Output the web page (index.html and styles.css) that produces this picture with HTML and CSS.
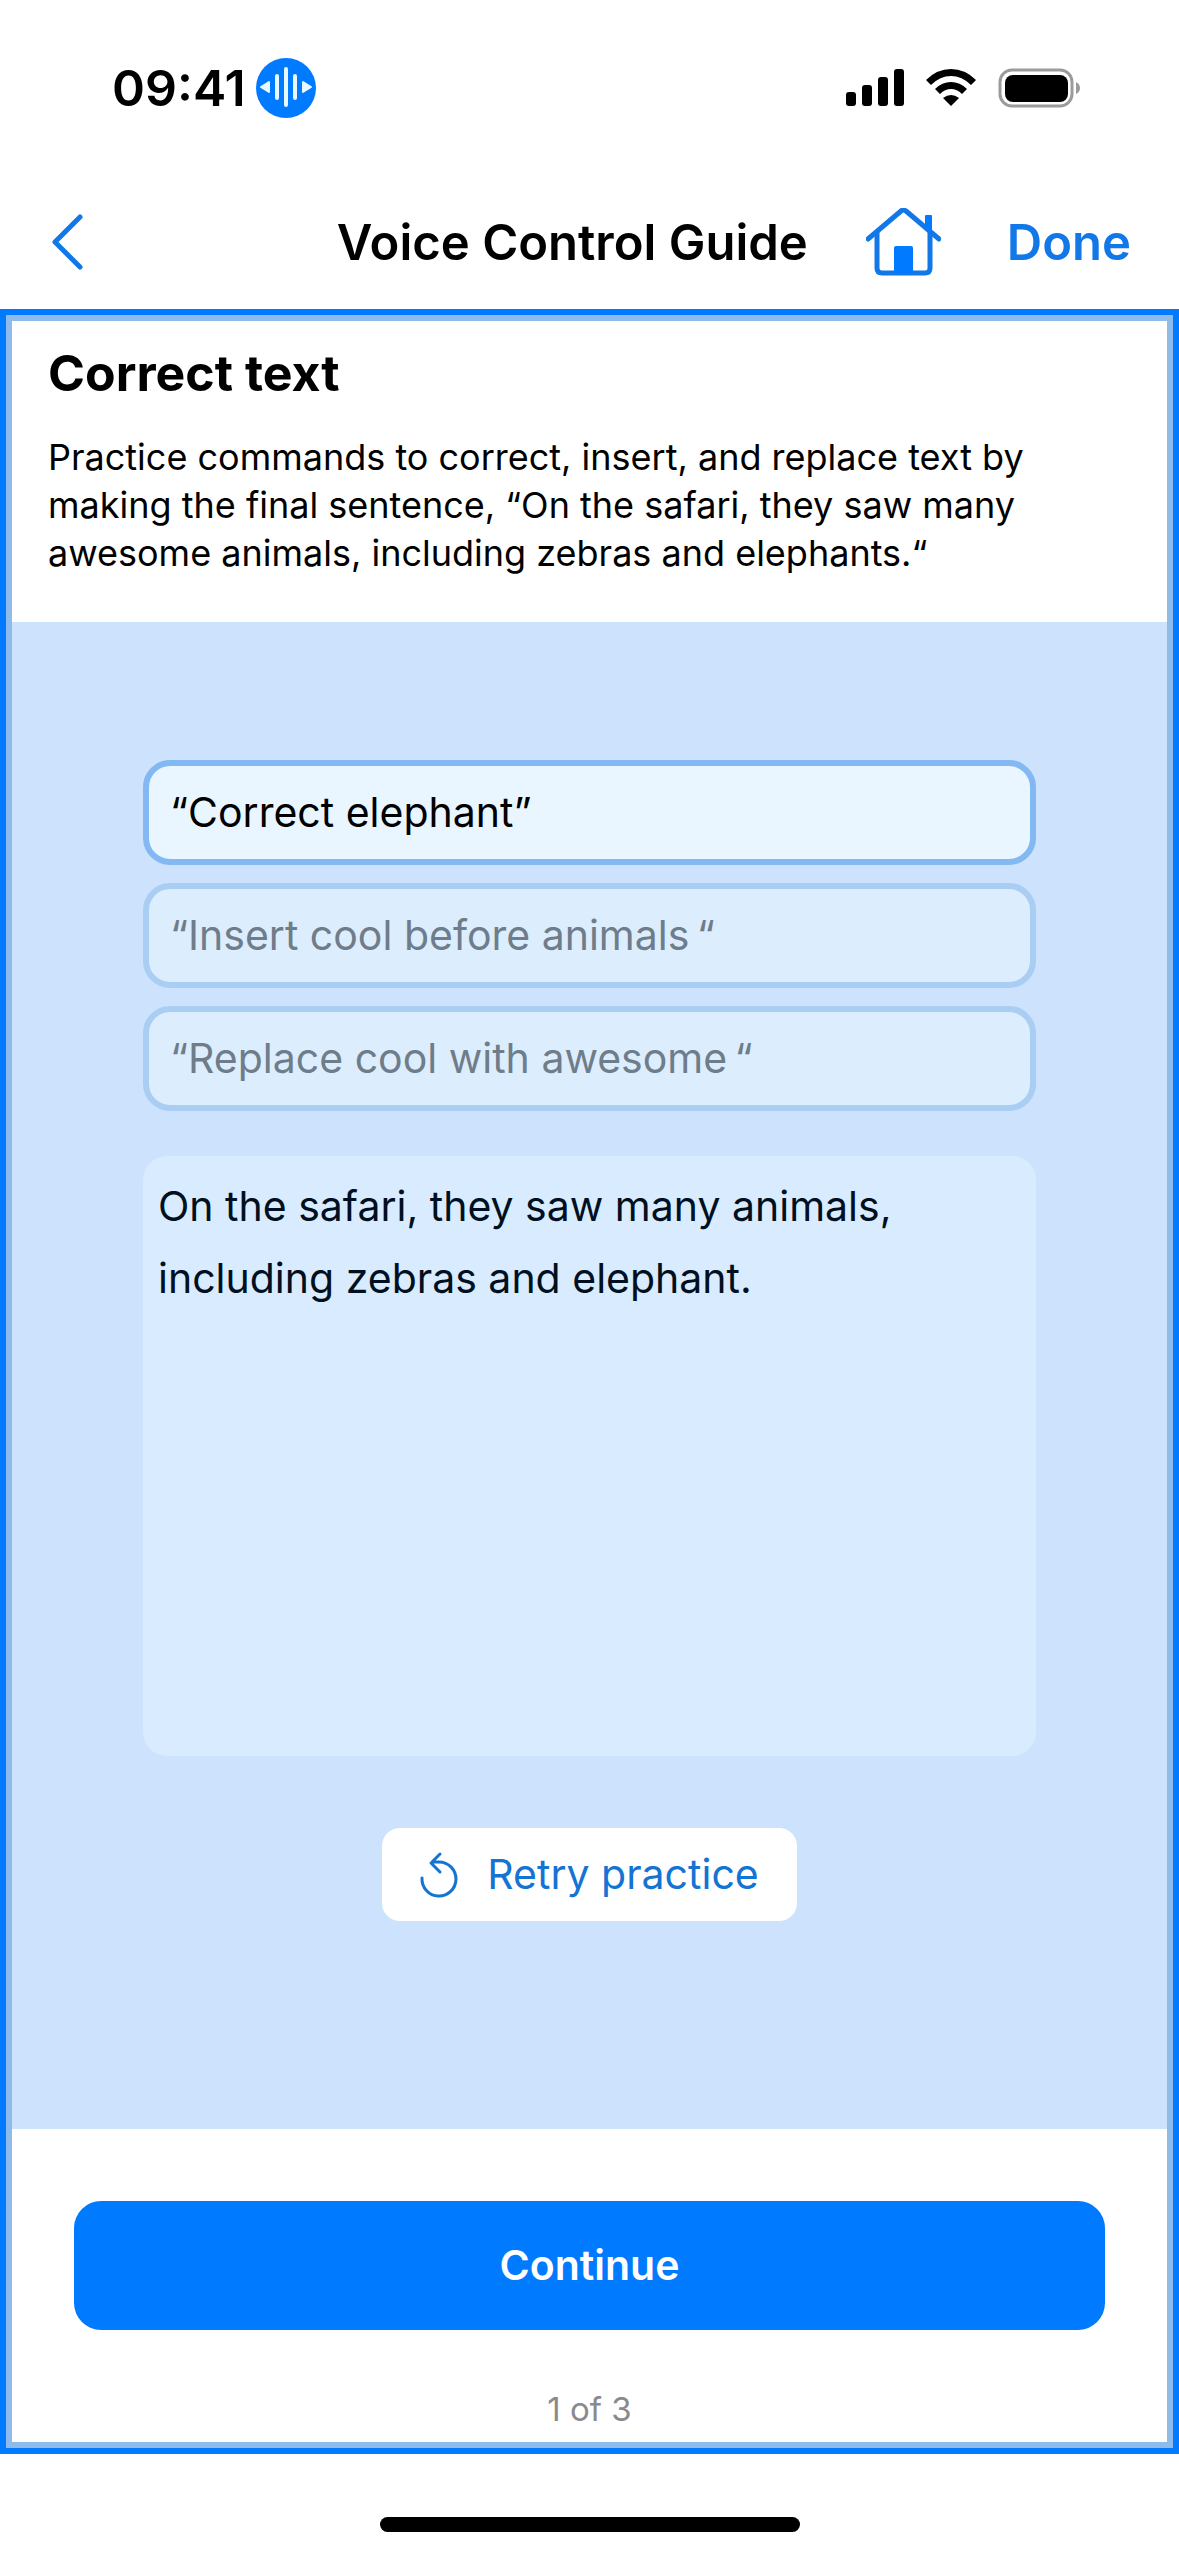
FILE: index.html
```
<!DOCTYPE html>
<html lang="en">
<head>
    <meta charset="UTF-8">
    <meta name="viewport" content="width=device-width, initial-scale=1.0">
    <title>Voice Control Guide</title>
    <link rel="stylesheet" href="styles.css">
</head>

<body>
    <div class="statusBar">
        <div class="clock">
            <span>09:41</span>
            <svg class="voiceIcon" viewBox="0 0 60 60" aria-hidden="true">
                <circle cx="30" cy="30" r="30" fill="#007aff"/>
                <path d="M21 18v22M30 11v36M39 18v22" stroke="#e8faff" stroke-width="4" stroke-linecap="round"/>
                <path d="M5 29l8-5v10zM55 29l-8-5v10z" fill="#e8faff" stroke="#e8faff" stroke-width="2" stroke-linejoin="round"/>
            </svg>
        </div>
        <div class="indicators">
            <svg width="58" height="38" viewBox="0 0 58 38" aria-hidden="true">
                <rect x="0" y="23" width="10" height="14" rx="3"/>
                <rect x="16" y="16" width="10" height="21" rx="3"/>
                <rect x="32" y="8" width="10" height="29" rx="3"/>
                <rect x="48" y="0" width="10" height="37" rx="3"/>
            </svg>
            <svg width="50" height="38" viewBox="0 0 50 38" aria-hidden="true">
                <path d="M0 11Q11 0 25 0T50 11L45 16Q36 7 25 7T5 16z"/>
                <path d="M9 20Q16 13 25 13T41 20L36 25Q31 20 25 20T14 25z"/>
                <path d="M17 29Q21 26 25 26T33 29L25 37z"/>
            </svg>
            <svg width="83" height="40" viewBox="0 0 83 40" aria-hidden="true">
                <rect x="2" y="2" width="72" height="36" rx="12" fill="none" stroke="#9b9b9b" stroke-width="3"/>
                <rect x="7" y="7" width="63" height="27" rx="8"/>
                <path d="M78 14q4 2 4 6t-4 6z" fill="#9b9b9b"/>
            </svg>
        </div>
    </div>

    <nav class="navBar">
        <button type="button" class="iconBtn" aria-label="Back">
            <svg width="38" height="58" viewBox="0 0 38 58"><path d="M32 3L7 28L32 53" fill="none" stroke="currentColor" stroke-width="5" stroke-linecap="round" stroke-linejoin="round"/></svg>
        </button>
        <h1>Voice Control Guide</h1>
        <button type="button" class="iconBtn" aria-label="Home">
            <svg width="75" height="70" viewBox="0 0 75 70">
                <path d="M2 31L35 3Q37 1 40 3L73 31" fill="none" stroke="currentColor" stroke-width="5" stroke-linecap="round" stroke-linejoin="round"/>
                <path d="M11 24V60Q11 65 16 65H59Q64 65 64 60V24" fill="none" stroke="currentColor" stroke-width="5"/>
                <path d="M59 18V8Q59 7 60 7H65Q66 7 66 8V25z" fill="#007aff"/>
                <path d="M28 65V40Q28 38 30 38H45Q47 38 47 40V65z" fill="#007aff"/>
            </svg>
        </button>
        <button type="button" class="doneBtn">Done</button>
    </nav>

    <main class="frame">
        <section class="intro">
            <h2>Correct text</h2>
            <p>Practice commands to correct, insert, and replace text by making the final sentence, “On the safari, they saw many awesome animals, including zebras and elephants.“</p>
        </section>

        <section class="practice">
            <ol class="commands">
                <li class="active">“Correct elephant”</li>
                <li>“Insert cool before animals&thinsp;“</li>
                <li>“Replace cool with awesome&thinsp;“</li>
            </ol>
            <textarea class="editor" aria-label="Practice text">On the safari, they saw many animals, including zebras and elephant.</textarea>
            <button type="button" class="retryBtn">
                <svg width="40" height="48" viewBox="0 0 40 48" aria-hidden="true">
                    <path d="M2 27A17 17 0 1 0 19 11H12M20 3L11 12L20 21" fill="none" stroke="currentColor" stroke-width="3" stroke-linecap="round" stroke-linejoin="round"/>
                </svg>
                Retry practice
            </button>
        </section>

        <footer class="bottom">
            <button type="button" class="continueBtn">Continue</button>
            <span class="pageCount">1 of 3</span>
        </footer>
    </main>

    <div class="homeIndicator"></div>
</body>
</html>
```

FILE: styles.css
```
* {
    box-sizing: border-box;
}

body {
    font-family: Inter, "Liberation Sans", sans-serif;
    background-color: #fff;
    color: #000;
    margin: 0;
    min-height: 100vh;
    display: flex;
    flex-direction: column;
}

h1, h2, p, ol {
    margin: 0;
    padding: 0;
}

button {
    font-family: inherit;
    border: none;
    background: none;
    padding: 0;
    color: #1278e8;
}

svg {
    display: block;
    flex: none;
}

/* status bar */
.statusBar {
    display: flex;
    justify-content: space-between;
    align-items: center;
    height: 176px;
    padding: 0 98px 0 112px;
}

.clock {
    display: flex;
    align-items: center;
    gap: 10px;
    font-size: 50px;
    font-weight: 600;
}

.voiceIcon {
    width: 60px;
    height: 60px;
}

.indicators {
    display: flex;
    align-items: center;
    gap: 22px;
}

/* navigation */
.navBar {
    display: flex;
    align-items: center;
    height: 133px;
    padding: 0 48px;
}

.navBar h1 {
    flex: 1;
    text-align: right;
    font-size: 49px;
    font-weight: 600;
    line-height: 60px;
}

.iconBtn + .doneBtn {
    margin-left: 66px;
}

h1 + .iconBtn {
    margin-left: 58px;
}

.doneBtn {
    font-size: 49px;
    font-weight: 600;
}

/* focused area */
.frame {
    flex: 1;
    display: flex;
    flex-direction: column;
    border: 6px solid #007aff;
    box-shadow: inset 0 0 0 6px #8fbbec;
    padding: 6px;
}

.intro {
    padding: 22px 36px 45px;
}

.intro h2 {
    font-size: 50px;
    font-weight: 700;
    line-height: 60px;
}

.intro p {
    margin-top: 30px;
    max-width: 1020px;
    font-size: 36px;
    line-height: 48px;
}

.practice {
    flex: 1;
    display: flex;
    flex-direction: column;
    align-items: center;
    padding: 138px 131px;
    background-color: #cce2fd;
}

.commands {
    list-style: none;
    width: 100%;
    display: flex;
    flex-direction: column;
    gap: 18px;
}

.commands li {
    padding: 21px;
    border: 6px solid #aacdf4;
    border-radius: 27px;
    background-color: #dcedfd;
    color: #6f7d8b;
    font-size: 41px;
    line-height: 51px;
}

.commands .active {
    border-color: #83b8f2;
    background-color: #e9f5ff;
    color: #000;
}

.editor {
    width: 100%;
    height: 600px;
    margin-top: 45px;
    padding: 14px 15px;
    border: none;
    border-radius: 24px;
    resize: none;
    background-color: #d9ebff;
    color: #001020;
    font-family: inherit;
    font-size: 41px;
    line-height: 72px;
}

.retryBtn {
    display: flex;
    align-items: center;
    gap: 27px;
    margin-top: 72px;
    padding: 21px 38px;
    border-radius: 18px;
    background-color: #fff;
    color: #1474d4;
    font-size: 41px;
    line-height: 51px;
}

.bottom {
    display: flex;
    flex-direction: column;
    padding: 72px 62px 12px;
}

.continueBtn {
    padding: 39px;
    border-radius: 27px;
    background-color: #007aff;
    color: #fff;
    font-size: 41px;
    font-weight: 600;
    line-height: 51px;
}

.pageCount {
    margin-top: 58px;
    color: #8a8a8e;
    font-size: 33px;
    line-height: 42px;
    text-align: center;
}

.homeIndicator {
    align-self: center;
    width: 420px;
    height: 15px;
    margin: 63px 0 24px;
    border-radius: 8px;
    background-color: #000;
}
```
